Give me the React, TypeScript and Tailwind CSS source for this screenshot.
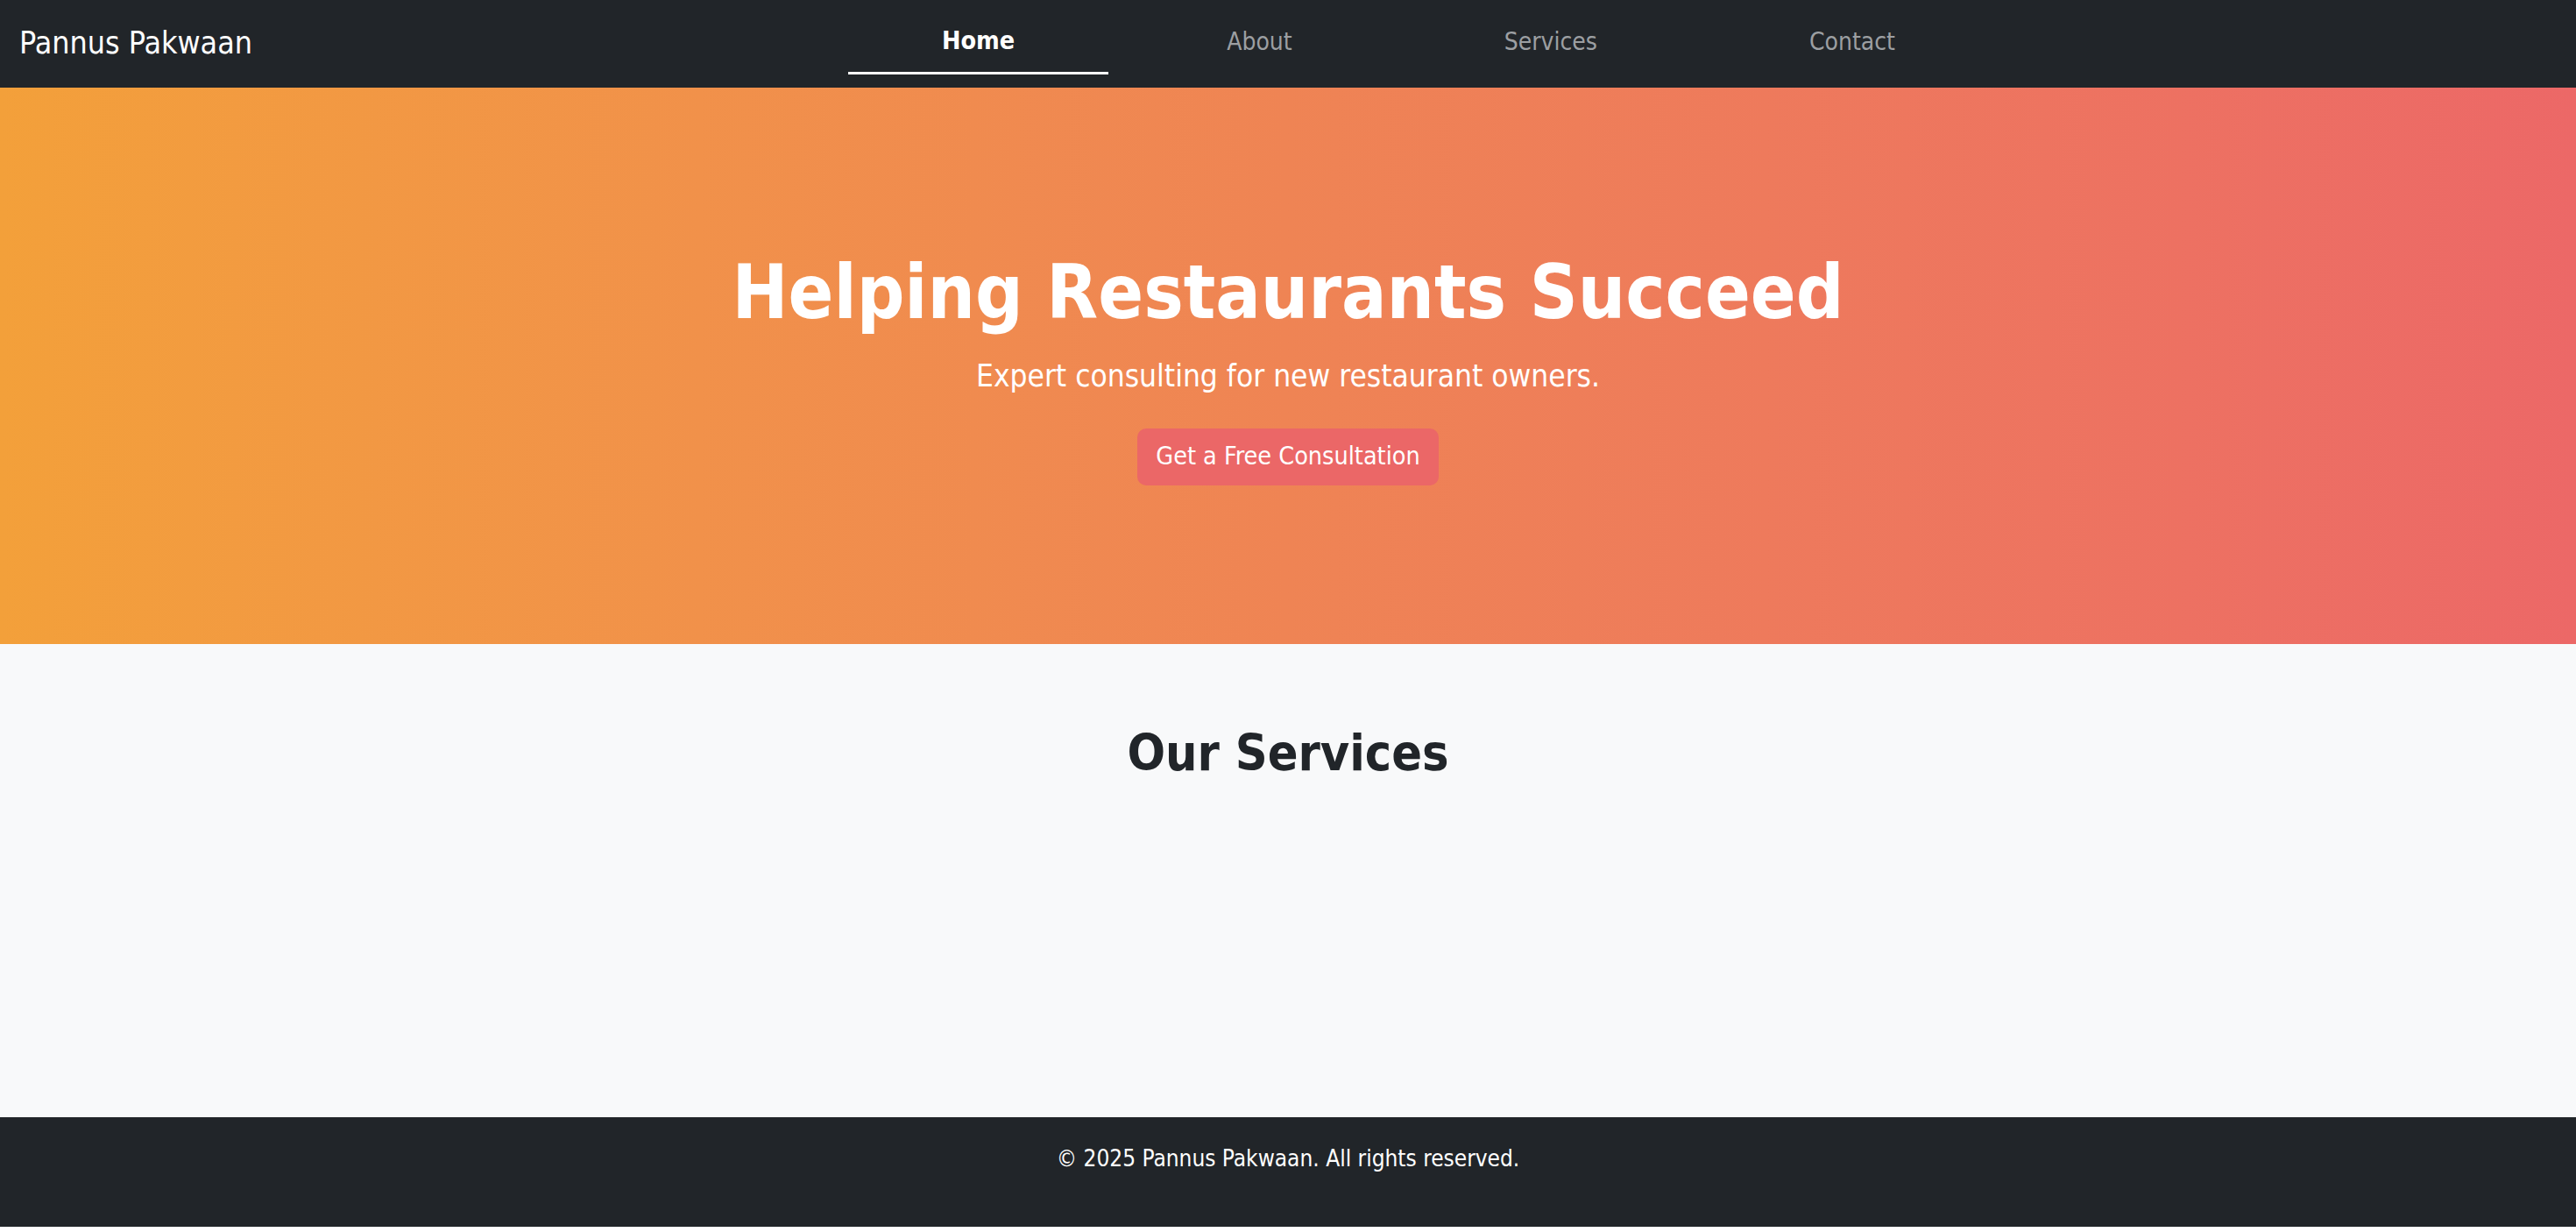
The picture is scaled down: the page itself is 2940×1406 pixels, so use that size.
import React from "react";

const font = { fontFamily: '"DejaVu Sans Condensed", "DejaVu Sans", Tahoma, sans-serif' };

export default function App() {
  const links = ["Home", "About", "Services", "Contact"];
  return (
    <div className="w-[2940px] bg-white" style={font}>
      <nav className="flex h-[100px] items-stretch bg-[#212529]">
        <div className="flex items-center pb-[3px] pl-[22px] text-[35.5px] text-white">Pannus Pakwaan</div>
        <ul className="ml-[680px] flex gap-[28px]">
          {links.map((l, i) => (
            <li key={l} className="relative flex items-center px-[107px] pb-[5px]">
              <span className={i === 0 ? "text-[28.5px] font-bold text-white" : "text-[28px] text-[#9c9fa2]"}>{l}</span>
              {i === 0 && <span className="absolute bottom-[15px] left-0 right-0 h-[3px] bg-white" />}
            </li>
          ))}
        </ul>
      </nav>
      <section className="flex h-[635px] flex-col items-center justify-center bg-gradient-to-r from-[#f3a03a] via-[#ef8454] to-[#ec6867] pt-[2px] text-white">
        <h1 className="text-[85px] font-bold leading-[1.2]">Helping Restaurants Succeed</h1>
        <p className="mt-[18px] text-[35px] leading-[1.5]">Expert consulting for new restaurant owners.</p>
        <button className="mt-[34px] h-[65px] rounded-[10px] bg-[#eb6767] px-[21px] text-[28.5px] text-white">
          Get a Free Consultation
        </button>
      </section>
      <section className="h-[540px] bg-[#f8f9fa] pt-[90px]">
        <h2 className="text-center text-[57px] font-bold leading-[1.2] text-[#212529]">Our Services</h2>
      </section>
      <footer className="h-[125px] bg-[#212529] pt-[28px] text-center text-[26px] leading-[1.5] text-white">
        © 2025 Pannus Pakwaan. All rights reserved.
      </footer>
    </div>
  );
}
